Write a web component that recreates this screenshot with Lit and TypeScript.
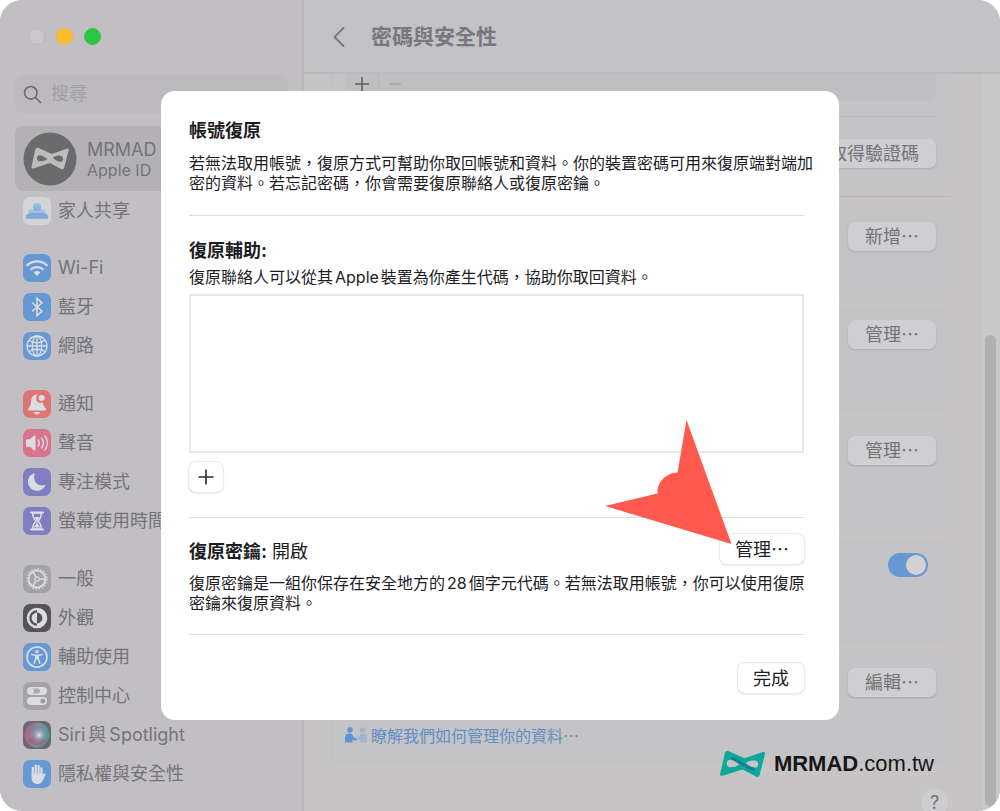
import { LitElement, html, css, svg, type TemplateResult } from "lit";
import { customElement, property } from "lit/decorators.js";
import { classMap } from "lit/directives/class-map.js";

const glyphs: Record<string, TemplateResult> = {
  family: svg`
    <defs><linearGradient id="fam" x1="0" y1="0" x2="0" y2="1"><stop offset="0" stop-color="#8fc8dc"/><stop offset="1" stop-color="#86a9dc"/></linearGradient></defs>
    <path d="M5 15.800c0-2.200 1.800-3.600 4-3.600h10c2.200 0 4 1.400 4 3.600z" fill="#a5c0e2"/>
    <circle cx="14" cy="10" r="4" fill="url(#fam)"/>
    <path d="M2.800 20.400c0-3 3.200-4.600 6-4.600h10.400c2.800 0 6 1.600 6 4.600 0 1-.7 1.400-1.600 1.400H4.400c-.9 0-1.600-.4-1.600-1.400z" fill="#7fa8dc"/>`,
  wifi: svg`
    <g fill="none" stroke="currentColor" stroke-width="2.300" stroke-linecap="butt">
      <path d="M3.600 11.700a14.600 14.600 0 0 1 20.800 0"/>
      <path d="M7.600 15.700a9 9 0 0 1 12.800 0"/>
    </g>
    <path d="M14 22l-3.400-3.500a4.800 4.800 0 0 1 6.800 0z" fill="currentColor"/>`,
  bluetooth: svg`<path d="M9 9.500l10 8.700-5 4.600V5.200l5 4.600-10 8.700" fill="none" stroke="currentColor" stroke-width="1.600" stroke-linejoin="miter"/>`,
  globe: svg`
    <g fill="none" stroke="currentColor" stroke-width="1.300">
      <circle cx="14" cy="14" r="10"/><ellipse cx="14" cy="14" rx="4.800" ry="10"/>
      <path d="M14 4v20M4 14h20M6 8.500c4.600 3 11.400 3 16 0M6 19.500c4.600-3 11.400-3 16 0"/>
    </g>`,
  bell: svg`
    <path d="M14 4.500c-3.700 0-5.600 2.600-5.800 6-.2 4-.8 5.700-3 8.100-.7.8-.4 1.900.8 1.900h16c1.200 0 1.500-1.100.8-1.900-1.800-2-2.600-3.400-2.900-6.300A4.200 4.200 0 0 1 15.200 4.600z" fill="currentColor"/>
    <circle cx="18.600" cy="8" r="3" fill="currentColor"/>
    <path d="M11 22h6a3 2.400 0 0 1-6 0z" fill="currentColor"/>`,
  sound: svg`
    <path d="M3 11.500c0-.7.500-1.200 1.200-1.200h2.600l4.400-3.700c.6-.5 1.300-.2 1.300.6v13.600c0 .8-.7 1.100-1.300.6l-4.400-3.700H4.200c-.7 0-1.200-.5-1.200-1.200z" fill="currentColor"/>
    <g fill="none" stroke="currentColor" stroke-width="1.400" stroke-linecap="round">
      <path d="M15.200 11a5 5 0 0 1 0 6M18.600 9a8.500 8.500 0 0 1 0 10M22 7a12 12 0 0 1 0 14"/>
    </g>`,
  moon: svg`<path d="M11.500 5.200c-3.800 1-6.600 4.500-6.600 8.600a9 9 0 0 0 9 9c4 0 7.400-2.500 8.700-6.100-1 .5-2.200.8-3.500.8a8 8 0 0 1-8-8c0-1.600.1-3 .9-4.100z" fill="currentColor"/>`,
  hourglass: svg`
    <path d="M8 5.500h12M8 22.500h12" stroke="currentColor" stroke-width="2" stroke-linecap="round"/>
    <path d="M9.600 6c0 4 1 5.600 3.200 8-2.200 2.400-3.200 4-3.200 8h8.800c0-4-1-5.600-3.200-8 2.200-2.400 3.200-4 3.200-8z" fill="none" stroke="currentColor" stroke-width="1.400"/>
    <path d="M11.400 10h5.200l-2 3.400v3.400l3 3.700h-7.200l3-3.700v-3.400z" fill="currentColor"/>`,
  gear: svg`
    <g fill="none" stroke="currentColor">
      <circle cx="14" cy="14" r="8.300" stroke-width="1.700"/>
      <circle cx="14" cy="14" r="9.900" stroke-width="1.600" stroke-dasharray="1.500 1.610"/>
      <circle cx="14" cy="14" r="2.200" stroke-width="1.200"/>
      <path d="M16.200 14h6M12.900 12.100l-3-5.200M12.900 15.900l-3 5.200" stroke-width="1.500"/>
    </g>`,
  appearance: svg`
    <circle cx="14" cy="14" r="9" fill="none" stroke="currentColor" stroke-width="2.600"/>
    <path d="M14 8.600a5.400 5.400 0 0 0 0 10.800z" fill="currentColor"/>
    <path d="M14 5v18a9 9 0 0 0 0-18z" fill="currentColor"/>
    <path d="M14 8.600a5.400 5.400 0 0 1 0 10.800z" fill="#555557"/>`,
  access: svg`
    <circle cx="14" cy="14" r="10" fill="none" stroke="currentColor" stroke-width="1.600"/>
    <circle cx="14" cy="8.600" r="1.700" fill="currentColor"/>
    <path d="M8.800 11.600l4 .8h2.400l4-.8" fill="none" stroke="currentColor" stroke-width="1.500" stroke-linecap="round" stroke-linejoin="round"/>
    <path d="M11.200 20.200l1.500-4.500v-3.300h2.600v3.300l1.500 4.500" fill="none" stroke="currentColor" stroke-width="1.500" stroke-linecap="round" stroke-linejoin="round"/>
    <path d="M12.600 12h2.800v4.500h-2.800z" fill="currentColor"/>`,
  control: svg`
    <rect x="4" y="5" width="20" height="8" rx="4" fill="currentColor"/>
    <rect x="6" y="6.600" width="11" height="4.800" rx="2.400" fill="#a8a7ab"/><circle cx="8.400" cy="9" r="2.600" fill="currentColor"/>
    <rect x="4" y="15" width="20" height="8" rx="4" fill="currentColor"/>
    <circle cx="19.800" cy="19" r="2.500" fill="#9b9a9e"/>`,
  siri: svg`
    <defs>
      <radialGradient id="orb"><stop offset="0" stop-color="#dfe8ee"/><stop offset=".4" stop-color="#a9b1c4" stop-opacity=".7"/><stop offset="1" stop-color="#8f7f96" stop-opacity="0"/></radialGradient>
      <linearGradient id="orbBase" x1="0" y1=".3" x2="1" y2=".5"><stop offset="0" stop-color="#b0607f"/><stop offset=".5" stop-color="#7f8ea6"/><stop offset="1" stop-color="#4e9a8d"/></linearGradient>
    </defs>
    <circle cx="14" cy="14" r="12.400" fill="url(#orbBase)"/>
    <path d="M4 20c6 6 15 5 20 0-5-1-7-5-10-6-4 1-6 3-10 6z" fill="#a5506f" opacity=".5"/>
    <circle cx="16" cy="14" r="9" fill="url(#orb)"/>`,
  hand: svg`
    <g stroke="currentColor" stroke-width="2.300" stroke-linecap="round" fill="none">
      <path d="M9.800 8v8M12.700 5.700V15M15.600 5.900V15M18.400 8.400V16M21.300 14.600l-2.300 4.600"/>
    </g>
    <path d="M8.650 13.500h10.900v3l1.900-3 .9 1.600-2.800 5.600c-1 2-2.500 3.300-5 3.300-3.600 0-5.900-2.300-5.900-6z" fill="currentColor"/>`,
};

const bow = "M9.800 1.200L25.500 8.300L43.800 2Q46.600 1.400 45.900 4.200L40.600 25Q39.600 28 37 26.500L23.500 19.400L3.500 25.800Q.5 26.500 1.200 23.500L6 2.500Q7 0 9.800 1.200Z";
const eyes = "M11.500 9.800C14 9.800 16 11.500 20.500 14.500C17 17 14 17.300 11.500 17.200A3.700 3.700 0 0 1 11.500 9.800ZM35.500 17.800C33 17.800 31 16.100 26.500 13.100C30 10.600 33 10.300 35.500 10.400A3.700 3.700 0 0 1 35.500 17.800Z";

@customElement("side-item")
export class SideItem extends LitElement {
  @property() icon = "";
  @property() tone = "blue";

  static styles = css`
    :host { display: block; }
    .row { display: flex; align-items: center; gap: 7px; height: 39px; color: #757378; text-decoration: none; white-space: nowrap; }
    .tile { flex: none; width: 28px; height: 28px; border-radius: 7px; color: #dcdde2; overflow: hidden; }
    .tile svg { display: block; width: 28px; height: 28px; }
    .white { background: #d3d4d7; }
    .blue { background: #6698d3; }
    .red { background: #dc7574; }
    .pink { background: #d9748c; }
    .indigo { background: #817dc1; }
    .gray { background: #a3a2a6; }
    .dark { background: #555557; }
    .siri { background: #6d6670; }
  `;

  render() {
    return html`<a class="row" href="#">
      <span class=${classMap({ tile: true, [this.tone]: true })}><svg viewBox="0 0 28 28" aria-hidden="true">${glyphs[this.icon]}</svg></span>
      <span><slot></slot></span>
    </a>`;
  }
}

@customElement("app-root")
export class AppRoot extends LitElement {
  static styles = css`
    :host {
      display: block;
      font-family: Inter, "Noto Sans CJK TC", sans-serif;
      font-size: 18px;
      line-height: 26px;
      color: #757378;
      background: #fff;
    }
    * { box-sizing: border-box; }
    button { font-family: "Noto Sans CJK TC", sans-serif; font-size: 18px; line-height: 26px; border: 0; padding: 0; color: inherit; white-space: nowrap; }
    h1, h2, p { margin: 0; }
    .window { position: relative; display: grid; grid-template-columns: 304px 1fr; height: 100vh; border-radius: 22px; overflow: hidden; background: #c6c4c5; }

    .sidebar { background: #c1bfc4; border-right: 2px solid #bab8bd; padding: 28px 14px 0 15px; overflow: hidden; }
    .lights { display: flex; gap: 11px; padding-left: 13px; margin-bottom: 30px; }
    .light { width: 17px; height: 17px; border-radius: 50%; background: #cac8cd; border: 1px solid #bbb9be; }
    .amber { background: #fdbc2d; border-color: #f3b73a; }
    .green { background: #28c840; border-color: #35c249; }
    .search { display: flex; align-items: center; gap: 9px; height: 38px; padding: 0 8px; border-radius: 8px; background: #bcbabe; margin-bottom: 13px; }
    .search svg { flex: none; width: 19px; height: 19px; }
    .search input { flex: 1; min-width: 0; border: 0; padding: 0; background: none; font: inherit; outline: none; }
    .search input::placeholder { color: #a19fa4; opacity: 1; }
    .profile { display: flex; align-items: center; gap: 10px; height: 65px; padding: 0 8px; border-radius: 8px; background: #b3b1b5; color: inherit; text-decoration: none; }
    .avatar { flex: none; width: 54px; height: 54px; }
    .who { display: grid; line-height: 20px; padding-top: 2px; }
    .who small { font-size: 16px; }
    .group { padding: 0 8px; margin-bottom: 18px; }
    .group + .group { margin-bottom: 19px; }
    .cjk { padding: 0 3px; }

    .main { display: flex; flex-direction: column; min-width: 0; }
    .bar { flex: none; display: flex; align-items: center; gap: 26px; height: 74px; padding: 1px 29px 0; background: #c3c2c7; border-bottom: 2px solid #bbbabe; }
    .back { background: none; display: flex; }
    .back svg { width: 12px; height: 22px; }
    .bar h1 { font-size: 21px; line-height: 30px; font-weight: 700; color: #79777c; }
    .scroll { flex: 1; min-height: 0; display: grid; grid-template-columns: 1fr 20px; overflow: hidden; }
    .body { padding: 0 29px 0 27px; overflow: hidden; }
    .card { display: flex; justify-content: flex-end; align-items: flex-start; background: #c4c4c6; border: 1px solid #c1c0c3; border-radius: 8px; padding: 10px 14px 0 13px; margin-bottom: 14px; min-height: 102px; }
    .short { min-height: 84px; }
    .top { display: block; height: 107px; border-radius: 0 0 8px 8px; border-top: 0; padding-top: 0; margin-bottom: 15px; min-height: 0; }
    .foot { display: flex; height: 27px; background: #bfbfc3; border-radius: 0 0 8px 8px; }
    .foot button { width: 33px; background: none; height: 19px; display: grid; place-items: center; }
    .foot button + button { border-left: 1px solid #b6b6ba; }
    .foot svg { width: 14px; height: 14px; }
    .line { border-top: 1px solid #b7b6b9; }
    .top .line { margin: 15px 0 22px; }
    .push { height: 29px; padding: 0 17px 3px; border-radius: 7px; background: #cfcfd1; box-shadow: 0 1px 2px #a9a9ad; display: block; }
    .top .push { margin-left: auto; }
    .section { margin-bottom: 14px; }
    .switch { appearance: none; margin: 1px 8px 0 0; width: 40px; height: 24px; border-radius: 12px; background: #6798d3; display: flex; justify-content: flex-end; padding: 2px; }
    .switch::before { content: ""; width: 20px; height: 20px; border-radius: 50%; background: #d2d2d4; }
    .last { min-height: 106px; flex-direction: column; align-items: stretch; justify-content: flex-start; gap: 26px; }
    .last .push { align-self: flex-end; }
    .learn { display: flex; align-items: center; gap: 4px; color: #5f8fc6; font: 16px/24px "Noto Sans CJK TC", sans-serif; text-decoration: none; }
    .learn svg { width: 22px; height: 16px; }
    .helprow { display: flex; justify-content: flex-end; padding: 12px 3px 0; }
    .help { width: 27px; height: 27px; border-radius: 50%; background: #cdcdcf; font-family: Inter, sans-serif; font-size: 18px; line-height: 14px; }
    .track { background: #c9c8c9; border-left: 1px solid #c1c0c1; padding: 261px 4px 10px; display: flex; }
    .thumb { flex: 1; border-radius: 6px; background: #b1b0b1; }

    .overlay { position: absolute; inset: 0; display: grid; place-items: center; }
    .dialog { position: relative; width: 678px; max-width: 100%; background: #fff; color: #1d1d1f; border-radius: 14px; padding: 27px 35px 27px 28px; }
    .dialog h2 { font-size: 18px; line-height: 26px; font-weight: 700; }
    .dialog p { font-size: 16px; line-height: 20px; white-space: nowrap; }
    .dialog hr { border: 0; border-top: 1px solid #dedede; margin: 22px 0 0; }
    .num { padding: 0 2px; }
    .intro { padding-top: 9px; }
    .dialog .assist { margin-top: 22px; }
    .assist-note { padding-top: 3px; }
    .contacts { height: 159px; border: 2px solid #e8e8e8; margin: 7px 0 9px; }
    .btn { height: 30px; border-radius: 7px; background: #fff; box-shadow: 0 0 1px 1px #e9e9e9, 0 1px 2px #c2c2c2; padding: 0 15px 3px; display: block; }
    .add { width: 34px; padding: 0; display: grid; place-items: center; }
    .add svg { width: 16px; height: 16px; }
    .dialog .mid { margin-top: 25px; }
    .keyrow { display: flex; justify-content: space-between; align-items: flex-end; padding-top: 16px; }
    .keyrow b { font-weight: 700; }
    .dialog .keyrow h2 { font-weight: 400; line-height: 24px; }
    .key-note { padding-top: 9px; }
    .dialog .end { margin-top: 21px; }
    .done { margin: 28px 0 0 auto; }
    .pointer { position: absolute; left: 444px; top: 328px; width: 128px; height: 126px; pointer-events: none; }

    .brand { position: absolute; right: 66px; bottom: 32px; display: flex; align-items: center; gap: 8px; color: #161618; font: 22px/30px "Liberation Sans", Arial, sans-serif; }
    .brand svg { width: 47px; height: 28px; }
  `;

  private card(label: string, extra = "") {
    return html`<section class="card ${extra}"><button class="push">${label}</button></section>`;
  }

  render() {
    return html`
      <div class="window">
        <nav class="sidebar">
          <div class="lights"><span class="light"></span><span class="light amber"></span><span class="light green"></span></div>
          <label class="search">
            <svg viewBox="0 0 19 19" fill="none" stroke="#6a686c" stroke-width="1.600" stroke-linecap="round" aria-hidden="true"><circle cx="7.800" cy="7.800" r="6.300"/><path d="M12.500 12.500l5 5"/></svg>
            <input type="text" placeholder="搜尋" aria-label="搜尋" />
          </label>
          <a class="profile" href="#">
            <svg class="avatar" viewBox="0 0 54 54" aria-hidden="true">
              <circle cx="27" cy="27" r="26.500" fill="#6b6b6c"/>
              <g transform="translate(7.500 15) scale(.83)">
                <path d=${bow} fill="#bdbcbf"/>
                <path d=${eyes} fill="#6b6b6c"/>
              </g>
            </svg>
            <span class="who"><span>MRMAD</span><small>Apple ID</small></span>
          </a>
          <div class="group"><side-item icon="family" tone="white">家人共享</side-item></div>
          <div class="group">
            <side-item icon="wifi">Wi-Fi</side-item>
            <side-item icon="bluetooth">藍牙</side-item>
            <side-item icon="globe">網路</side-item>
          </div>
          <div class="group">
            <side-item icon="bell" tone="red">通知</side-item>
            <side-item icon="sound" tone="pink">聲音</side-item>
            <side-item icon="moon" tone="indigo">專注模式</side-item>
            <side-item icon="hourglass" tone="indigo">螢幕使用時間</side-item>
          </div>
          <div class="group">
            <side-item icon="gear" tone="gray">一般</side-item>
            <side-item icon="appearance" tone="dark">外觀</side-item>
            <side-item icon="access">輔助使用</side-item>
            <side-item icon="control" tone="gray">控制中心</side-item>
            <side-item icon="siri" tone="siri">Siri<span class="cjk">與</span>Spotlight</side-item>
            <side-item icon="hand">隱私權與安全性</side-item>
          </div>
        </nav>

        <main class="main">
          <header class="bar">
            <button class="back" aria-label="返回"><svg viewBox="0 0 12 22" fill="none" stroke="#7a787d" stroke-width="2" stroke-linecap="round" stroke-linejoin="round"><path d="M10.500 2L1.500 11l9 9"/></svg></button>
            <h1>密碼與安全性</h1>
          </header>
          <div class="scroll">
            <div class="body">
              <section class="card top">
                <div class="foot">
                  <button aria-label="加入"><svg viewBox="0 0 14 14" stroke="#5c5b5e" stroke-width="1.500"><path d="M7 0v14M0 7h14"/></svg></button>
                  <button aria-label="移除"><svg viewBox="0 0 14 14" stroke="#a5a4a8" stroke-width="1.400"><path d="M1 7h12"/></svg></button>
                </div>
                <div class="line"></div>
                <button class="push">取得驗證碼</button>
              </section>
              <div class="line section"></div>
              ${this.card("新增…", "short")}
              ${this.card("管理…")}
              ${this.card("管理…")}
              <section class="card"><input class="switch" type="checkbox" role="switch" checked aria-label="開啟" /></section>
              <section class="card last">
                <button class="push">編輯…</button>
                <a class="learn" href="#">
                  <svg viewBox="0 0 22 16" aria-hidden="true">
                    <circle cx="5" cy="3" r="2.800" fill="#5b93d6"/><path d="M0 15.500V10c0-2.300 1.700-3.600 4.500-3.600 2.400 0 3.500 1.300 4 3.900l3.800 1.500-.9 1.700-3.900-.6v2.600z" fill="#5b93d6"/>
                    <circle cx="17.500" cy="3" r="2.800" fill="#9db4d2"/><path d="M22 15.500V10c0-2.300-1.500-3.600-4-3.600-2.200 0-3 1.500-3.600 3.700l-2.100 2 2.800 1v2.400z" fill="#9db4d2"/>
                  </svg>
                  <span>瞭解我們如何管理你的資料…</span>
                </a>
              </section>
              <div class="helprow"><button class="help" aria-label="輔助說明">?</button></div>
            </div>
            <div class="track"><div class="thumb"></div></div>
          </div>
        </main>

        <div class="overlay">
          <div class="dialog" role="dialog" aria-modal="true" aria-labelledby="dlg-title">
            <h2 id="dlg-title">帳號復原</h2>
            <p class="intro">若無法取用帳號，復原方式可幫助你取回帳號和資料。你的裝置密碼可用來復原端對端加<br />密的資料。若忘記密碼，你會需要復原聯絡人或復原密鑰。</p>
            <hr />
            <h2 class="assist">復原輔助:</h2>
            <p class="assist-note">復原聯絡人可以從其<span class="num">Apple</span>裝置為你產生代碼，協助你取回資料。</p>
            <div class="contacts"></div>
            <button class="btn add" aria-label="加入"><svg viewBox="0 0 16 16" stroke="#2b2b2d" stroke-width="1.600"><path d="M8 .5v15M.5 8h15"/></svg></button>
            <hr class="mid" />
            <div class="keyrow"><h2><b>復原密鑰:</b> 開啟</h2><button class="btn">管理…</button></div>
            <p class="key-note">復原密鑰是一組你保存在安全地方的<span class="num">28</span>個字元代碼。若無法取用帳號，你可以使用復原<br />密鑰來復原資料。</p>
            <hr class="end" />
            <button class="btn done">完成</button>
            <svg class="pointer" viewBox="0 0 128 126" aria-hidden="true"><path d="M81.500 1L126.500 125 0 87 52.500 74.500C52 63 61 54 72.500 53.500Z" fill="#ff5a4d"/></svg>
          </div>
        </div>

        <div class="brand">
          <svg viewBox="0 0 47 28" aria-hidden="true">
            <path d=${bow} fill="#0fa79a"/>
            <path d=${eyes} fill="#c5c4c6"/>
            <path d="M12 8.500Q15 8.300 18 10.500L29 17.300Q32 19.300 35.500 19" fill="none" stroke="#157f96" stroke-width="3"/>
          </svg>
          <span><b>MRMAD</b>.com.tw</span>
        </div>
      </div>
    `;
  }
}
